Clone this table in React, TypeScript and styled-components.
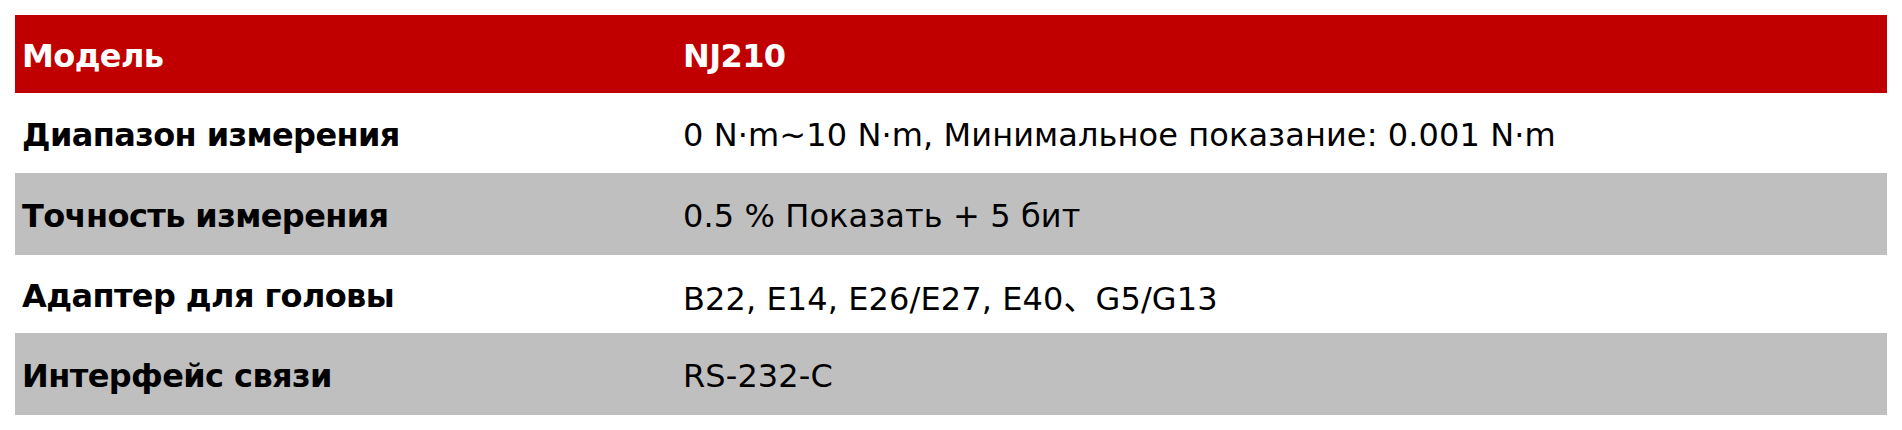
import React from 'react';
import styled, { createGlobalStyle } from 'styled-components';

const GlobalStyle = createGlobalStyle`
  html, body {
    margin: 0;
    padding: 0;
    background: #ffffff;
  }
  body {
    padding: 15px 15px 0 15px;
    font-family: 'DejaVu Sans', Verdana, 'Noto Sans CJK SC', sans-serif;
  }
`;

interface SpecRow {
  label: string;
  value: string;
}

const specs: SpecRow[] = [
  { label: 'Диапазон измерения', value: '0 N·m~10 N·m, Минимальное показание: 0.001 N·m' },
  { label: 'Точность измерения', value: '0.5 % Показать + 5 бит' },
  { label: 'Адаптер для головы', value: 'B22, E14, E26/E27, E40、G5/G13' },
  { label: 'Интерфейс связи', value: 'RS-232-C' },
];

const Table = styled.div`
  display: grid;
  grid-template-columns: 661px 1fr;
  grid-template-rows: 78px 80px 82px 78px 82px;
  width: 1872px;
`;

const Cell = styled.div<{ variant: 'head' | 'light' | 'dark'; bold?: boolean }>`
  display: flex;
  align-items: center;
  padding: 4px 0 0 7px;
  font-size: 32px;
  font-weight: ${(p) => (p.bold ? 700 : 400)};
  letter-spacing: ${(p) => (p.bold ? '-0.6px' : '0.1px')};
  color: ${(p) => (p.variant === 'head' ? '#ffffff' : '#000000')};
  background-color: ${(p) =>
    p.variant === 'head' ? '#c00000' : p.variant === 'dark' ? '#bfbfbf' : '#ffffff'};
  white-space: nowrap;
`;

const App: React.FC = () => {
  return (
    <>
      <GlobalStyle />
      <Table>
        <Cell variant="head" bold>
          Модель
        </Cell>
        <Cell variant="head" bold>
          NJ210
        </Cell>
        {specs.map((row, i) => {
          const variant = i % 2 === 1 ? 'dark' : 'light';
          return (
            <React.Fragment key={row.label}>
              <Cell variant={variant} bold>
                {row.label}
              </Cell>
              <Cell variant={variant}>{row.value}</Cell>
            </React.Fragment>
          );
        })}
      </Table>
    </>
  );
};

export default App;
